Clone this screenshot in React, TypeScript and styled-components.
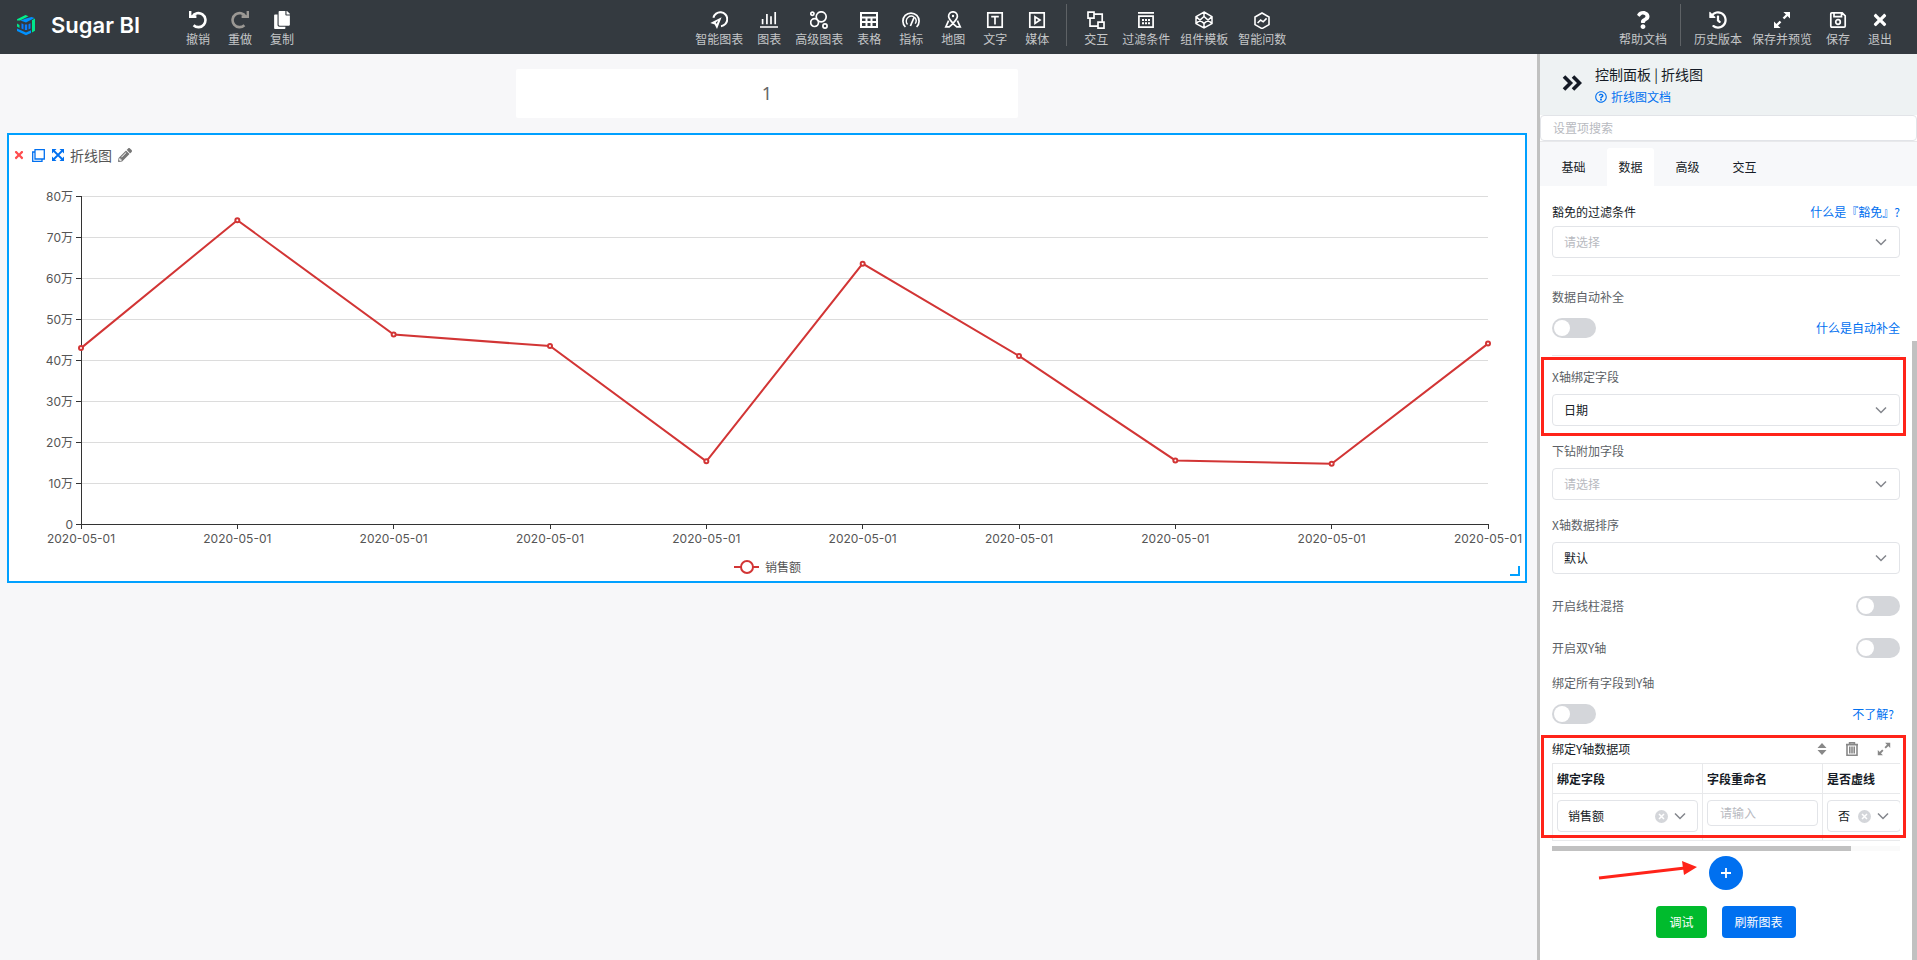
import React, { useLayoutEffect, useRef, useState } from 'react';
import styled, { createGlobalStyle } from 'styled-components';
import { FaCopy, FaHistory, FaPencilAlt, FaQuestion, FaRegQuestionCircle, FaTimes } from 'react-icons/fa';

const fontStack = '"Noto Sans CJK SC", "Noto Sans", sans-serif';

const GlobalStyle = createGlobalStyle`
  *, *::before, *::after { box-sizing: border-box; }
  body { margin: 0; font-family: ${fontStack}; font-size: 12px; color: #151b26; background: #f7f7f9; }
  button, input, select { font: inherit; color: inherit; }
  button { border: 0; padding: 0; background: none; cursor: pointer; }
  a { color: #0070f0; text-decoration: none; }
`;

const Page = styled.div`
  display: flex;
  flex-direction: column;
  min-height: 100vh;
`;

/* ---------- top bar ---------- */

const TopBar = styled.header`
  display: flex;
  align-items: stretch;
  height: 54px;
  padding: 0 16px;
  background: #343a40;
`;

const Brand = styled.div`
  display: flex;
  align-items: center;
  gap: 15px;
  width: 161px;
  padding-bottom: 4px;
  color: #fff;
  font: 600 22px Inter, sans-serif;
  white-space: nowrap;
`;

const Spacer = styled.div<{ $grow: number }>`
  flex: ${p => p.$grow} 1 0;
`;

const Tools = styled.nav`
  display: flex;
`;

const Tool = styled.button<{ $muted?: boolean }>`
  display: flex;
  flex-direction: column;
  align-items: center;
  min-width: 42px;
  height: 54px;
  padding: 11px 5px 0;
  color: ${p => (p.$muted ? '#9b9894' : '#fff')};
  svg { width: 18px; height: 18px; display: block; }
`;

const ToolLabel = styled.span`
  margin-top: 2px;
  color: #c4c6c8;
  line-height: 16px;
  white-space: nowrap;
`;

const Separator = styled.i`
  width: 1px;
  height: 42px;
  margin: 4px 8px 0;
  background: #5e6266;
`;

/* ---------- canvas ---------- */

const Main = styled.main`
  display: flex;
  flex: 1;
`;

const Canvas = styled.section`
  flex: 1;
  min-width: 0;
  padding: 15px 10px 0 7px;
`;

const FilterCard = styled.div`
  width: 33%;
  margin: 0 auto 15px;
  border-radius: 2px;
  background: #fff;
  color: #666;
  font: 18px/49px "Noto Sans", sans-serif;
  text-align: center;
`;

const ChartCard = styled.article`
  position: relative;
  border: 2px solid #00a0ff;
  background: #fff;
`;

const ChartHead = styled.div`
  display: flex;
  align-items: center;
  height: 41px;
  padding: 0 0 1px 4px;
  color: #0070f0;
`;

const ChartTitle = styled.h2`
  margin: 0 6px;
  color: #555;
  font-size: 14px;
  font-weight: 400;
`;

const HeadButton = styled.button<{ $color: string; $gap?: number }>`
  display: flex;
  margin-right: ${p => p.$gap || 0}px;
  color: ${p => p.$color};
`;

const ResizeCorner = styled.i`
  position: absolute;
  right: 5px;
  bottom: 5px;
  width: 10px;
  height: 10px;
  border: solid #00a0ff;
  border-width: 0 2px 2px 0;
`;

const Plot = styled.svg`
  display: block;
  width: 100%;
  height: 405px;
  text { font: 12px Inter, "Noto Sans CJK SC", sans-serif; fill: #555; }
`;

/* ---------- side panel ---------- */

const Panel = styled.aside`
  display: flex;
  flex-direction: column;
  flex: 0 0 380px;
  min-width: 0;
  border-left: 3px solid #c1c1c1;
  background: #fff;
`;

const PanelHead = styled.div`
  display: flex;
  align-items: center;
  height: 61px;
  padding-left: 22px;
  gap: 13px;
  background: #eef2f3;
`;

const PanelTitle = styled.h1`
  margin: 0;
  font-size: 14px;
  font-weight: 400;
  line-height: 24px;
`;

const DocLink = styled.a`
  display: flex;
  align-items: center;
  gap: 4px;
  line-height: 22px;
`;

const Search = styled.input`
  height: 26px;
  padding: 0 12px 2px;
  border: 1px solid #e2e4e8;
  border-radius: 4px;
  outline: 0;
  background: #fff;
  &::placeholder { color: #b8babf; }
`;

const Tabs = styled.div`
  display: flex;
  align-items: flex-end;
  gap: 10px;
  height: 45px;
  padding-left: 10px;
  border-top: 1px solid #e8e9eb;
  background: #f7f8fa;
`;

const Tab = styled.button<{ $active?: boolean }>`
  flex: 0 0 47px;
  height: 38px;
  padding-bottom: 2px;
  border-radius: 3px 3px 0 0;
  background: ${p => (p.$active ? '#fff' : 'transparent')};
`;

const PanelBody = styled.div`
  display: flex;
  flex: 1;
`;

const Form = styled.form`
  flex: 1;
  min-width: 0;
  padding: 16px 12px 20px;
`;

const ScrollTrack = styled.div`
  display: flex;
  flex-direction: column;
  justify-content: flex-end;
  width: 5px;
  &::after { content: ''; height: 80%; background: #c1c1c1; }
`;

const Group = styled.div<{ $divided?: boolean; $tight?: boolean }>`
  position: relative;
  padding-top: ${p => (p.$divided ? 11 : p.$tight ? 0 : 15)}px;
  margin-top: ${p => (p.$divided ? 17 : 0)}px;
  border-top: ${p => (p.$divided ? '1px solid #e8e9eb' : '0')};
`;

const Highlight = styled.i<{ $top: number; $bottom: number }>`
  position: absolute;
  top: ${p => p.$top}px;
  bottom: ${p => p.$bottom}px;
  left: -11px;
  right: -6px;
  border: 3px solid #ff2319;
  pointer-events: none;
`;

const Row = styled.div<{ $top?: number }>`
  display: flex;
  align-items: center;
  justify-content: space-between;
  margin-top: ${p => p.$top || 0}px;
`;

const Label = styled.label<{ $strong?: boolean }>`
  color: ${p => (p.$strong ? '#151b26' : '#5c5f66')};
  font-weight: 400;
  line-height: 20px;
`;

const HelpLink = styled.a<{ $inset?: boolean }>`
  margin-right: ${p => (p.$inset ? 6 : 0)}px;
  line-height: 20px;
`;

const SelectBox = styled.div<{ $top?: number; $width?: number }>`
  position: relative;
  width: ${p => (p.$width ? p.$width + 'px' : 'auto')};
  margin-top: ${p => p.$top || 0}px;
`;

const SelectControl = styled.select<{ $empty?: boolean; $small?: boolean }>`
  display: block;
  width: 100%;
  height: 32px;
  padding: 0 ${p => (p.$small ? 10 : 11)}px 2px;
  appearance: none;
  border: 1px solid #e2e4e8;
  border-radius: 4px;
  outline: 0;
  background: #fff;
  color: ${p => (p.$empty ? '#b8babf' : '#151b26')};
`;

const SelectIcons = styled.span<{ $small?: boolean }>`
  position: absolute;
  top: 0;
  right: ${p => (p.$small ? 12 : 13)}px;
  display: flex;
  align-items: center;
  gap: 6px;
  height: 32px;
  pointer-events: none;
`;

const Switch = styled.input`
  display: flex;
  align-items: center;
  width: 44px;
  height: 20px;
  margin: 0;
  padding: 0 2px;
  appearance: none;
  border-radius: 10px;
  background: #d4d6da;
  cursor: pointer;
  &::before { content: ''; width: 16px; height: 16px; border-radius: 50%; background: #fff; }
  &:checked { background: #0070f0; justify-content: flex-end; }
`;

const RowActions = styled.div`
  display: flex;
  align-items: center;
  gap: 18px;
  padding-right: 9px;
  color: #888;
  button { display: flex; }
`;

const TableScroll = styled.div`
  margin-top: 4px;
  overflow: hidden;
`;

const FieldTable = styled.table`
  width: 404px;
  table-layout: fixed;
  border-collapse: separate;
  border-spacing: 0;
  border: solid #e8e9eb;
  border-width: 1px 0 0 1px;
  th, td { border: solid #e8e9eb; border-width: 0 1px 1px 0; text-align: left; vertical-align: top; }
  th { height: 30px; padding: 0 4px; font-weight: 700; line-height: 29px; }
  td { height: 47px; padding: 6px 4px 0; }
`;

const TextInput = styled.input`
  display: block;
  width: 100%;
  height: 26px;
  padding: 0 12px 2px;
  border: 1px solid #e2e4e8;
  border-radius: 4px;
  outline: 0;
  &::placeholder { color: #b8babf; }
`;

const HScroll = styled.div`
  height: 5px;
  margin-top: 5px;
  background: #fafafa;
  &::before { content: ''; display: block; width: 86%; height: 5px; background: #c1c1c1; }
`;

const Centered = styled.div<{ $top: number }>`
  position: relative;
  display: flex;
  justify-content: center;
  gap: 15px;
  margin-top: ${p => p.$top}px;
`;

const AddButton = styled.button`
  display: flex;
  align-items: center;
  justify-content: center;
  width: 34px;
  height: 34px;
  border-radius: 50%;
  background: #0070f0;
`;

const ActionButton = styled.button<{ $color: string }>`
  height: 32px;
  padding: 0 13px 2px;
  border-radius: 4px;
  background: ${p => p.$color};
  color: #fff;
`;

const PointerArrow = styled.svg`
  position: absolute;
  top: 4px;
  left: 46px;
`;

/* ---------- icons ---------- */

const Icon = ({ children, w = 1.7, size = 18 }: { children: React.ReactNode; w?: number; size?: number }) => (
  <svg width={size} height={size} viewBox="0 0 18 18" fill="none" stroke="currentColor" strokeWidth={w} aria-hidden="true">
    {children}
  </svg>
);

const UndoIcon = () => (
  <Icon w={2.6}>
    <path d="M3.4 5.6A7 7 0 1 1 4.6 14.2" />
    <path d="M0 0h2.4v4.2h5v2.8H0z" fill="currentColor" stroke="none" />
  </Icon>
);
const RedoIcon = () => (
  <Icon w={2.6}>
    <path d="M14.6 5.6A7 7 0 1 0 13.4 14.2" />
    <path d="M18 0h-2.4v4.2h-5v2.8H18z" fill="currentColor" stroke="none" />
  </Icon>
);
const SmartChartIcon = () => (
  <Icon w={2}>
    <path d="M3.4 6.8A7 7 0 1 1 11 15.2" />
    <path d="M11.6 6.2L.3 12l4.4 1.4L7 17.9z" fill="currentColor" stroke="none" />
    <path d="M8 9.6l-2.2 1.8 1 1.6z" fill="#343a40" stroke="none" />
  </Icon>
);
const BarsIcon = () => (
  <Icon>
    <path d="M2.6 8v5.3M6.9 3v10.3M11 5.3v8M15.2 1v12.3M0 16h18" />
  </Icon>
);
const BubblesIcon = () => (
  <Icon>
    <circle cx="11.2" cy="5.8" r="5" />
    <circle cx="2.4" cy="2.7" r="1.6" />
    <circle cx="4.6" cy="11.6" r="3.9" />
    <circle cx="15" cy="15" r="2.1" />
  </Icon>
);
const TableIcon = () => (
  <Icon w={2}>
    <path d="M1 2h16v14H1zM1 6.5h16M1 11h16M6.5 6.5V16M11.5 6.5V16" />
  </Icon>
);
const GaugeIcon = () => (
  <Icon>
    <path d="M3.4 16A8.100 8.100 0 1 1 14.600 16" />
    <path d="M5.500 13.500A5 5 0 0 1 6.200 6.200 5 5 0 0 1 11.800 5.600M12.800 6.500a5 5 0 0 1 .4 6.200" strokeWidth="1.400" />
    <path d="M8.400 15l4-9.400" />
  </Icon>
);
const MapIcon = () => (
  <Icon>
    <path d="M9 12.2C6.4 9.3 4.6 7.6 4.6 5.2a4.4 4.4 0 0 1 8.8 0c0 2.4-1.8 4.1-4.4 7z" />
    <circle cx="9" cy="5" r="1.200" fill="currentColor" stroke="none" />
    <path d="M4.600 9.600L1.800 15.800h3.400L9 12.600l3.800 3.200h3.400l-2.800-6.200" />
  </Icon>
);
const TextIcon = () => (
  <Icon>
    <path d="M1.8 1.9h14.4v14.2H1.8zM5.2 5.6h7.6M9 5.6v8" />
  </Icon>
);
const MediaIcon = () => (
  <Icon>
    <path d="M1.8 1.9h14.4v14.2H1.8zM7 5.8v6.6L12 9z" />
  </Icon>
);
const InteractIcon = () => (
  <Icon>
    <path d="M1 1.2h6v6H1zM11 11.2h6v6h-6zM7 3.2h8.2v8M3 7.2v8h8" />
  </Icon>
);
const FilterIcon = () => (
  <Icon>
    <path d="M1 1.8h16M1.9 5.2h14.2v10.9H1.9z" />
    <path d="M5 9h8M5 12.3h8" strokeWidth="2" strokeDasharray="2 1" />
  </Icon>
);
const TemplateIcon = () => (
  <Icon w={1.5}>
    <path d="M9 1l8 4.6v7L9 17l-8-4.4v-7zM9 1v4.4M9 12.6V17M1 5.6l8 7 8-7M1 12.6l8-7.2 8 7.2" />
  </Icon>
);
const AskIcon = () => (
  <Icon w={1.6}>
    <path d="M9 2.600l7 4v7.600l-7 4-7-4V6.600z" transform="translate(0 -.6)" />
    <path d="M4.600 12l3-3 2.600 1.800 3.400-3.400" />
  </Icon>
);
const ExpandIcon = ({ size = 18 }: { size?: number }) => (
  <Icon w={2.4} size={size}>
    <path d="M17 1v6.600L10.400 1zM1 17v-6.600L7.600 17z" fill="currentColor" stroke="none" />
    <path d="M14.500 3.500l-4 4M3.500 14.500l4-4" />
  </Icon>
);
const SaveIcon = () => (
  <Icon>
    <path d="M2.800 1.900h10.400l3 3v10.200a1 1 0 0 1-1 1H2.800a1 1 0 0 1-1-1V2.900a1 1 0 0 1 1-1zM5 2v3.600h7.500V2" />
    <circle cx="9" cy="11" r="2.300" />
  </Icon>
);
const ChevronsIcon = () => (
  <svg width="20" height="16" viewBox="0 0 20 16" fill="none" stroke="currentColor" strokeWidth="3.600" aria-hidden="true">
    <path d="M2 1.500L8.500 8 2 14.500M11 1.500L17.500 8 11 14.500" />
  </svg>
);
const Chevron = () => (
  <svg width="12" height="12" viewBox="0 0 12 12" fill="none" stroke="#83868c" strokeWidth="1.500" aria-hidden="true">
    <path d="M1 3.500l5 5 5-5" />
  </svg>
);
const ClearIcon = () => (
  <svg width="13" height="13" viewBox="0 0 13 13" aria-hidden="true">
    <circle cx="6.500" cy="6.500" r="6.500" fill="#d4d6da" />
    <path d="M4 4l5 5M9 4l-5 5" stroke="#fff" strokeWidth="1.500" />
  </svg>
);
const LogoIcon = () => (
  <svg width="20" height="22" viewBox="0 0 20 22" aria-hidden="true">
    <path d="M1 5.200L9.500 1l3 1.200L4 6.600H1z" fill="#00f08c" />
    <path d="M16 6.200l3-1.600v12.200L16 18.500z" fill="#00e68c" />
    <path d="M1 9.500l2.500 1.500v3L1 12.500z" fill="#00e68c" />
    <path d="M4.500 6.600l5.500-2 5.500-1.600 3 1L10 8.600z" fill="#0091ff" />
    <path d="M5.500 9.200l2 1v5.200l-2-1zM8.800 10.500h2.400V16H8.800zM12.500 10.200l2-1v5.200l-2 1z" fill="#0a7dff" />
    <path d="M1 14.500l9 4 5-2.200v2.600L10 21.300l-9-4.200z" fill="#0091ff" />
  </svg>
);

/* ---------- chart ---------- */

const values = [42.9, 74.1, 46.2, 43.4, 15.3, 63.5, 41, 15.5, 14.7, 44];

const LineChart = () => {
  const ref = useRef<SVGSVGElement>(null);
  const [width, setWidth] = useState(1516);
  useLayoutEffect(() => {
    const el = ref.current;
    if (!el) return;
    const measure = () => setWidth(el.getBoundingClientRect().width);
    measure();
    const observer = new ResizeObserver(measure);
    observer.observe(el);
    return () => observer.disconnect();
  }, []);

  const left = 72;
  const right = width - 37;
  const top = 20;
  const bottom = 348;
  const x = (i: number) => left + ((right - left) * i) / (values.length - 1);
  const y = (v: number) => bottom - ((bottom - top) * v) / 80;
  const middle = width / 2;

  return (
    <Plot ref={ref} role="img" aria-label="销售额折线图">
      <g shapeRendering="crispEdges">
        {[10, 20, 30, 40, 50, 60, 70, 80].map(v => (
          <line key={v} x1={left} x2={right} y1={y(v) + 0.5} y2={y(v) + 0.5} stroke="#dcdcdc" />
        ))}
        <path d={`M${left + 0.5} ${top}V${bottom}M${left - 5} ${bottom + 0.5}H${right}`} stroke="#333" />
        {values.map((_, i) => (
          <line key={i} x1={Math.floor(x(i)) + 0.5} x2={Math.floor(x(i)) + 0.5} y1={bottom} y2={bottom + 5} stroke="#333" />
        ))}
        {[10, 20, 30, 40, 50, 60, 70, 80].map(v => (
          <line key={v} x1={left - 5} x2={left} y1={y(v) + 0.5} y2={y(v) + 0.5} stroke="#333" />
        ))}
      </g>
      {[0, 10, 20, 30, 40, 50, 60, 70, 80].map(v => (
        <text key={v} x={left - 8} y={y(v) + 5} textAnchor="end">{v ? `${v}万` : '0'}</text>
      ))}
      {values.map((_, i) => (
        <text key={i} x={x(i)} y={bottom + 19} textAnchor="middle">2020-05-01</text>
      ))}
      <polyline points={values.map((v, i) => `${x(i)},${y(v)}`).join(' ')} fill="none" stroke="#d23535" strokeWidth="2" />
      {values.map((v, i) => (
        <circle key={i} cx={x(i)} cy={y(v)} r="2" fill="#fff" stroke="#d23535" strokeWidth="2" />
      ))}
      <path d={`M${middle - 33} 391h25`} stroke="#d23535" strokeWidth="2" />
      <circle cx={middle - 20} cy="391" r="6" fill="#fff" stroke="#d23535" strokeWidth="2" />
      <text x={middle - 2} y="396">销售额</text>
    </Plot>
  );
};

/* ---------- composed parts ---------- */

const ToolItem = ({ icon, label, muted }: { icon: React.ReactNode; label: string; muted?: boolean }) => (
  <Tool type="button" $muted={muted}>
    {icon}
    <ToolLabel>{label}</ToolLabel>
  </Tool>
);

type PickerProps = { id: string; value: string; empty?: boolean; top?: number; clearable?: boolean; width?: number; label?: string };

const Picker = ({ id, value, empty, top, clearable, width, label }: PickerProps) => (
  <SelectBox $top={top} $width={width}>
    <SelectControl id={id} $empty={empty} $small={clearable} aria-label={label}>
      <option>{value}</option>
    </SelectControl>
    <SelectIcons $small={clearable}>
      {clearable && <ClearIcon />}
      <Chevron />
    </SelectIcons>
  </SelectBox>
);

export default function App() {
  return (
    <Page>
      <GlobalStyle />
      <TopBar>
        <Brand><LogoIcon />Sugar BI</Brand>
        <Tools>
          <ToolItem icon={<UndoIcon />} label="撤销" />
          <ToolItem icon={<RedoIcon />} label="重做" muted />
          <ToolItem icon={<FaCopy />} label="复制" />
        </Tools>
        <Spacer $grow={6} />
        <Tools>
          <ToolItem icon={<SmartChartIcon />} label="智能图表" />
          <ToolItem icon={<BarsIcon />} label="图表" />
          <ToolItem icon={<BubblesIcon />} label="高级图表" />
          <ToolItem icon={<TableIcon />} label="表格" />
          <ToolItem icon={<GaugeIcon />} label="指标" />
          <ToolItem icon={<MapIcon />} label="地图" />
          <ToolItem icon={<TextIcon />} label="文字" />
          <ToolItem icon={<MediaIcon />} label="媒体" />
          <Separator />
          <ToolItem icon={<InteractIcon />} label="交互" />
          <ToolItem icon={<FilterIcon />} label="过滤条件" />
          <ToolItem icon={<TemplateIcon />} label="组件模板" />
          <ToolItem icon={<AskIcon />} label="智能问数" />
        </Tools>
        <Spacer $grow={5} />
        <Tools>
          <ToolItem icon={<FaQuestion />} label="帮助文档" />
          <Separator />
          <ToolItem icon={<FaHistory />} label="历史版本" />
          <ToolItem icon={<ExpandIcon />} label="保存并预览" />
          <ToolItem icon={<SaveIcon />} label="保存" />
          <ToolItem icon={<FaTimes />} label="退出" />
        </Tools>
      </TopBar>

      <Main>
        <Canvas>
          <FilterCard>1</FilterCard>
          <ChartCard>
            <ChartHead>
              <HeadButton type="button" aria-label="删除" $color="#ff4d4f" $gap={7}><FaTimes size={12} /></HeadButton>
              <HeadButton type="button" aria-label="复制" $color="#0070f0" $gap={7}>
                <svg width="13" height="13" viewBox="0 0 13 13" fill="none" stroke="currentColor" strokeWidth="1.300">
                  <path d="M3 .7h9.300V10H3zM3 3H.7v9.300H10V10" />
                </svg>
              </HeadButton>
              <HeadButton type="button" aria-label="全屏" $color="#0070f0">
                <svg width="12" height="12" viewBox="0 0 12 12" fill="currentColor" stroke="currentColor">
                  <path d="M0 0h4.500L0 4.500zM12 0v4.500L7.500 0zM0 12V7.500L4.500 12zM12 12H7.500L12 7.500z" stroke="none" />
                  <path d="M2 2l8 8M10 2l-8 8" strokeWidth="1.800" />
                </svg>
              </HeadButton>
              <ChartTitle>折线图</ChartTitle>
              <HeadButton type="button" aria-label="编辑标题" $color="#777"><FaPencilAlt size={14} /></HeadButton>
            </ChartHead>
            <LineChart />
            <ResizeCorner />
          </ChartCard>
        </Canvas>

        <Panel>
          <PanelHead>
            <button type="button" aria-label="收起"><ChevronsIcon /></button>
            <div>
              <PanelTitle>控制面板 | 折线图</PanelTitle>
              <DocLink href="#doc"><FaRegQuestionCircle size={12} />折线图文档</DocLink>
            </div>
          </PanelHead>
          <Search placeholder="设置项搜索" aria-label="设置项搜索" />
          <Tabs role="tablist">
            <Tab type="button" role="tab">基础</Tab>
            <Tab type="button" role="tab" $active aria-selected="true">数据</Tab>
            <Tab type="button" role="tab">高级</Tab>
            <Tab type="button" role="tab">交互</Tab>
          </Tabs>
          <PanelBody>
            <Form>
              <Group $tight>
                <Row>
                  <Label htmlFor="exempt" $strong>豁免的过滤条件</Label>
                  <HelpLink href="#exempt">什么是『豁免』?</HelpLink>
                </Row>
                <Picker id="exempt" value="请选择" empty top={4} />
              </Group>
              <Group $divided>
                <Label htmlFor="fill">数据自动补全</Label>
                <Row $top={11}>
                  <Switch type="checkbox" role="switch" id="fill" />
                  <HelpLink href="#fill">什么是自动补全</HelpLink>
                </Row>
              </Group>
              <Group $divided>
                <Label htmlFor="xfield">X轴绑定字段</Label>
                <Picker id="xfield" value="日期" top={7} />
                <Highlight $top={1} $bottom={-10} />
              </Group>
              <Group>
                <Label htmlFor="drill">下钻附加字段</Label>
                <Picker id="drill" value="请选择" empty top={7} />
              </Group>
              <Group>
                <Label htmlFor="sort">X轴数据排序</Label>
                <Picker id="sort" value="默认" top={7} />
              </Group>
              <Row $top={22}>
                <Label htmlFor="mix">开启线柱混搭</Label>
                <Switch type="checkbox" role="switch" id="mix" />
              </Row>
              <Row $top={22}>
                <Label htmlFor="dual">开启双Y轴</Label>
                <Switch type="checkbox" role="switch" id="dual" />
              </Row>
              <Group>
                <Label htmlFor="bindall">绑定所有字段到Y轴</Label>
                <Row $top={11}>
                  <Switch type="checkbox" role="switch" id="bindall" />
                  <HelpLink href="#bindall" $inset>不了解?</HelpLink>
                </Row>
              </Group>
              <Group>
                <Row>
                  <Label as="span" $strong>绑定Y轴数据项</Label>
                  <RowActions>
                    <button type="button" aria-label="排序">
                      <svg width="10" height="12" viewBox="0 0 10 12" fill="currentColor"><path d="M5 0l4.500 5h-9zM5 12L.5 7h9z" /></svg>
                    </button>
                    <button type="button" aria-label="删除">
                      <svg width="14" height="14" viewBox="0 0 14 14" fill="none" stroke="currentColor" strokeWidth="1.600">
                        <path d="M1 2.600h12M4.600 2V.800h4.800V2M2 3v10.200h10V3M4.800 4.500v7M7 4.500v7M9.200 4.500v7" />
                      </svg>
                    </button>
                    <button type="button" aria-label="展开"><ExpandIcon size={14} /></button>
                  </RowActions>
                </Row>
                <TableScroll>
                  <FieldTable>
                    <colgroup><col width="150" /><col width="120" /><col width="84" /><col /></colgroup>
                    <thead>
                      <tr><th>绑定字段</th><th>字段重命名</th><th>是否虚线</th><th /></tr>
                    </thead>
                    <tbody>
                      <tr>
                        <td><Picker id="yfield" label="绑定字段" value="销售额" clearable /></td>
                        <td><TextInput placeholder="请输入" aria-label="字段重命名" /></td>
                        <td><Picker id="dashed" label="是否虚线" value="否" clearable width={74} /></td>
                        <td />
                      </tr>
                    </tbody>
                  </FieldTable>
                </TableScroll>
                <Highlight $top={11} $bottom={3} />
              </Group>
              <HScroll />
              <Centered $top={5}>
                <AddButton type="button" aria-label="添加">
                  <svg width="10" height="10" viewBox="0 0 10 10"><path d="M5 0v10M0 5h10" stroke="#fff" strokeWidth="1.800" /></svg>
                </AddButton>
                <PointerArrow width="102" height="24" viewBox="0 0 102 24" aria-hidden="true">
                  <path d="M1 18l86-10" stroke="#ff2319" strokeWidth="3" />
                  <path d="M84 1l15 6-13 8z" fill="#ff2319" />
                </PointerArrow>
              </Centered>
              <Centered $top={16}>
                <ActionButton type="button" $color="#00bb2d">调试</ActionButton>
                <ActionButton type="button" $color="#0070f0">刷新图表</ActionButton>
              </Centered>
            </Form>
            <ScrollTrack />
          </PanelBody>
        </Panel>
      </Main>
    </Page>
  );
}
